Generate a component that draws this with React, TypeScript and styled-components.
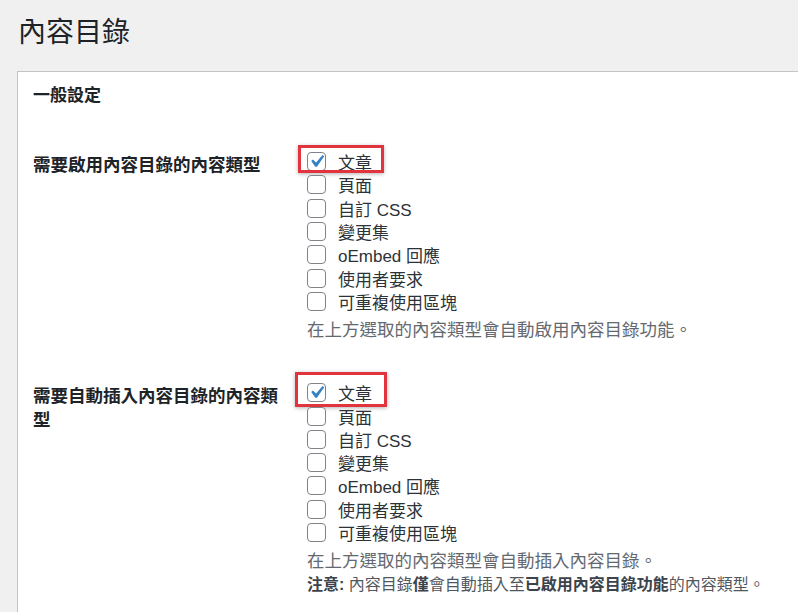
import React from "react";
import styled, { createGlobalStyle } from "styled-components";

const GlobalStyle = createGlobalStyle`
  html, body {
    margin: 0;
    padding: 0;
    background: #f0f0f1;
    overflow: hidden;
  }
  body {
    font-family: "Liberation Sans", "Noto Sans CJK TC", sans-serif;
    color: #1d2327;
  }
`;

const Wrap = styled.div`
  padding: 15px 0 0 17px;
`;

const PageTitle = styled.h1`
  margin: 0 0 20px 1px;
  font-size: 28px;
  line-height: 36px;
  font-weight: 400;
  color: #1d2327;
`;

const Panel = styled.div`
  background: #fff;
  border: 1px solid #c3c4c7;
  border-right: none;
  margin-right: -20px;
  padding: 12px 0 40px 15px;
`;

const SectionTitle = styled.h2`
  margin: 0 0 22px;
  font-size: 17px;
  line-height: 24px;
  font-weight: 700;
  color: #1d2327;
`;

const SettingRow = styled.div`
  display: flex;
  align-items: flex-start;
  padding: 20px 0 19px;
`;

const RowLabel = styled.div`
  width: 250px;
  flex: none;
  padding: 3px 24px 0 0;
  font-size: 17.5px;
  line-height: 24px;
  font-weight: 700;
  color: #1d2327;
`;

const RowField = styled.div`
  display: flex;
  flex-direction: column;
`;

const CheckItem = styled.label`
  position: relative;
  display: flex;
  align-items: center;
  height: 23.3px;
  font-size: 17px;
  color: #2c3338;
  white-space: nowrap;
`;

const Box = styled.span`
  width: 19px;
  height: 19px;
  box-sizing: border-box;
  border: 1px solid #80848a;
  border-radius: 4px;
  background: #fff;
  margin-right: 12px;
  display: inline-flex;
  align-items: center;
  justify-content: center;
  flex: none;

  svg {
    flex: none;
    margin: -3px;
  }
`;

const Highlight = styled.span<{ $top: number; $left: number; $w: number; $h: number }>`
  position: absolute;
  top: ${(p) => p.$top}px;
  left: ${(p) => p.$left}px;
  width: ${(p) => p.$w}px;
  height: ${(p) => p.$h}px;
  box-sizing: border-box;
  border: 3px solid #e2343f;
  box-shadow: 0 1px 4px rgba(0, 0, 0, 0.3);
  pointer-events: none;
`;

const Description = styled.p`
  margin: 6px 0 0;
  font-size: 17.5px;
  line-height: 23px;
  color: #646970;
`;

const Note = styled.p`
  margin: 0;
  font-size: 16px;
  line-height: 23px;
  color: #50575e;

  b {
    font-weight: 700;
    color: #3c434a;
  }
`;

const postTypes = ["文章", "頁面", "自訂 CSS", "變更集", "oEmbed 回應", "使用者要求", "可重複使用區塊"];

type Mark = { top: number; left: number; w: number; h: number };

const CheckMark = () => (
  <svg width="25" height="25" viewBox="0 0 20 20">
    <path d="M14.83 4.89l1.34.94-5.81 8.38H9.02L5.78 9.67l1.34-1.25 2.57 2.4z" fill="#3582c4" />
  </svg>
);

const TypeList = ({ mark }: { mark: Mark }) => (
  <>
    {postTypes.map((name, i) => (
      <CheckItem key={name}>
        <Box>{i === 0 && <CheckMark />}</Box>
        {name}
        {i === 0 && <Highlight $top={mark.top} $left={mark.left} $w={mark.w} $h={mark.h} />}
      </CheckItem>
    ))}
  </>
);

export default function App() {
  return (
    <Wrap>
      <GlobalStyle />
      <PageTitle>內容目錄</PageTitle>
      <Panel>
        <SectionTitle>一般設定</SectionTitle>
        <SettingRow>
          <RowLabel>需要啟用內容目錄的內容類型</RowLabel>
          <RowField>
            <TypeList mark={{ top: -5, left: -9, w: 86, h: 28 }} />
            <Description>在上方選取的內容類型會自動啟用內容目錄功能。</Description>
          </RowField>
        </SettingRow>
        <SettingRow>
          <RowLabel>需要自動插入內容目錄的內容類型</RowLabel>
          <RowField>
            <TypeList mark={{ top: -9, left: -12, w: 92, h: 35 }} />
            <Description>在上方選取的內容類型會自動插入內容目錄。</Description>
            <Note>
              <b>注意:</b> 內容目錄<b>僅</b>會自動插入至<b>已啟用內容目錄功能</b>的內容類型。
            </Note>
          </RowField>
        </SettingRow>
      </Panel>
    </Wrap>
  );
}
